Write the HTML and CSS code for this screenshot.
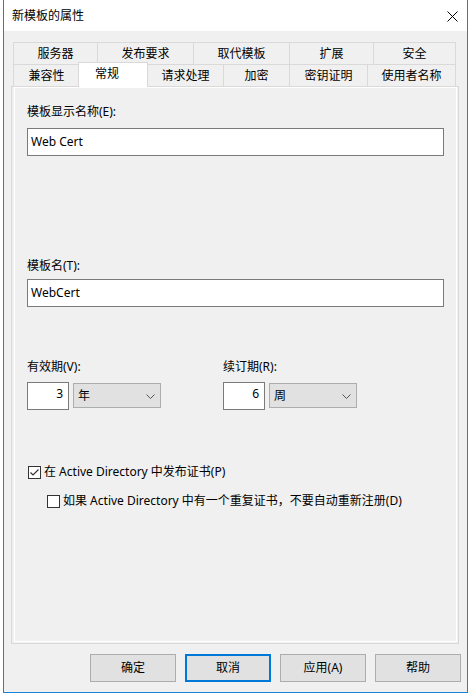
FILE: index.html
```html
<!DOCTYPE html>
<html lang="zh-CN">
<head>
<meta charset="utf-8">
<title>新模板的属性</title>
<link rel="stylesheet" href="styles.css">
</head>
<body>
<div class="window">
  <div class="titlebar">
    <span class="title">新模板的属性</span>
    <span class="close"><svg width="11" height="11" viewBox="0 0 11 11"><path d="M0.5 0.5L10.5 10.5M10.5 0.5L0.5 10.5" stroke="#000" stroke-width="1" fill="none"/></svg></span>
  </div>
  <div class="content">
    <div class="tabs">
      <div class="tabrow row1">
        <div class="tab">服务器</div>
        <div class="tab">发布要求</div>
        <div class="tab">取代模板</div>
        <div class="tab">扩展</div>
        <div class="tab last">安全</div>
      </div>
      <div class="tabrow row2">
        <div class="tab">兼容性</div>
        <div class="tab active">常规</div>
        <div class="tab">请求处理</div>
        <div class="tab">加密</div>
        <div class="tab">密钥证明</div>
        <div class="tab last">使用者名称</div>
      </div>
    </div>
    <div class="panel">
      <div class="page">
        <div class="label">模板显示名称(E):</div>
        <div class="textbox first">Web Cert</div>
        <div class="label gap-big">模板名(T):</div>
        <div class="textbox second">WebCert</div>
        <div class="periods">
          <div class="period">
            <div class="label">有效期(V):</div>
            <div class="period-row">
              <div class="numbox">3</div>
              <div class="select"><span>年</span><svg width="9" height="5" viewBox="0 0 9 5"><path d="M0.5 0.5L4.5 4.5L8.5 0.5" stroke="#555" fill="none"/></svg></div>
            </div>
          </div>
          <div class="period">
            <div class="label">续订期(R):</div>
            <div class="period-row">
              <div class="numbox">6</div>
              <div class="select"><span>周</span><svg width="9" height="5" viewBox="0 0 9 5"><path d="M0.5 0.5L4.5 4.5L8.5 0.5" stroke="#555" fill="none"/></svg></div>
            </div>
          </div>
        </div>
        <div class="check check1">
          <span class="box"><svg width="11" height="11" viewBox="0 0 11 11"><path d="M1.5 5.5L4 8L9.5 2.5" stroke="#333" stroke-width="1.2" fill="none"/></svg></span>
          <span>在 Active Directory 中发布证书(P)</span>
        </div>
        <div class="check check2">
          <span class="box"></span>
          <span>如果 Active Directory 中有一个重复证书，不要自动重新注册(D)</span>
        </div>
      </div>
    </div>
    <div class="buttons">
      <div class="btn">确定</div>
      <div class="btn default">取消</div>
      <div class="btn">应用(A)</div>
      <div class="btn">帮助</div>
    </div>
  </div>
</div>
</body>
</html>
```

FILE: styles.css
```css
* { box-sizing: border-box; }
html, body {
  margin: 0;
  padding: 0;
  background: #ffffff;
}
body {
  font-family: "Noto Sans", "Noto Sans CJK SC", sans-serif;
  font-size: 12px;
  line-height: 16px;
  color: #000;
}
.window {
  margin-left: 3px;
  width: 465px;
  height: 693px;
  border: 1px solid #1883d7;
  border-top: none;
  background: #f0f0f0;
  display: flex;
  flex-direction: column;
}
.titlebar {
  height: 31px;
  background: #fff;
  display: flex;
  align-items: center;
  justify-content: space-between;
  padding: 0 9px 0 8px;
}
.title { padding-bottom: 0; }
.close { display: flex; padding-top: 1px; }
.close svg { display: block; }

.content {
  flex: 1;
  display: flex;
  flex-direction: column;
  padding-top: 11px;
}
.tabs { margin-left: 9px; }
.tabrow {
  display: grid;
  height: 22px;
}
.row1 { grid-template-columns: 84px 96px 96px 84px 83px; }
.row2 { grid-template-columns: 66px 68px 76px 66px 78px 89px; }
.tab {
  border-left: 1px solid #d9d9d9;
  border-top: 1px solid #d9d9d9;
  display: flex;
  align-items: center;
  justify-content: center;
  white-space: nowrap;
}
.tab.last { border-right: 1px solid #d9d9d9; }
.tab.active {
  position: relative;
  z-index: 1;
  background: #fff;
  border-right: 1px solid #d9d9d9;
  margin: -2px -1px -1px -1px;
  padding: 0 12px 3px 0;
}

.panel {
  height: 558px;
  margin: 0 8px 0 7px;
  border: 1px solid #d9d9d9;
  display: flex;
  flex-direction: column;
}
.page {
  flex: 1;
  margin: 0 1px 1px 2px;
  border: 1px solid #fff;
  padding: 16px 0 0 12px;
  display: flex;
  flex-direction: column;
  align-items: flex-start;
}
.label { height: 16px; white-space: nowrap; }
.textbox {
  width: 417px;
  height: 28px;
  border: 1px solid #7a7a7a;
  background: #fff;
  padding: 0 0 0 3px;
  display: flex;
  align-items: center;
}
.textbox.first { margin-top: 8px; }
.label.gap-big { margin-top: 102px; }
.textbox.second { margin-top: 5px; }

.periods {
  margin-top: 52px;
  display: grid;
  grid-template-columns: 196px 140px;
}
.period-row {
  margin-top: 7px;
  display: flex;
  align-items: flex-start;
  gap: 4px;
}
.numbox {
  width: 42px;
  height: 28px;
  border: 1px solid #7a7a7a;
  background: #fff;
  text-align: right;
  padding: 3px 5px 0 0;
}
.select {
  margin-top: 1px;
  width: 88px;
  height: 25px;
  border: 1px solid #adadad;
  background: #e1e1e1;
  display: flex;
  align-items: center;
  justify-content: space-between;
  padding: 0 5px 0 4px;
}
.select svg { display: block; margin-top: 1px; }

.check {
  display: flex;
  align-items: center;
  height: 16px;
  white-space: nowrap;
}
.check1 { margin-top: 54px; margin-left: 1px; }
.check2 { margin-top: 13px; margin-left: 20px; }
.box {
  width: 13px;
  height: 13px;
  border: 1px solid #333;
  background: #fff;
  margin-right: 3px;
  display: flex;
  align-items: center;
  justify-content: center;
}
.box svg { display: block; }

.buttons {
  margin-top: 10px;
  display: flex;
  justify-content: flex-end;
  gap: 9px;
  padding-right: 6px;
}
.btn {
  width: 86px;
  height: 28px;
  border: 1px solid #adadad;
  background: #e1e1e1;
  display: flex;
  align-items: center;
  justify-content: center;
}
.btn.default { border: 2px solid #0078d7; }
```
